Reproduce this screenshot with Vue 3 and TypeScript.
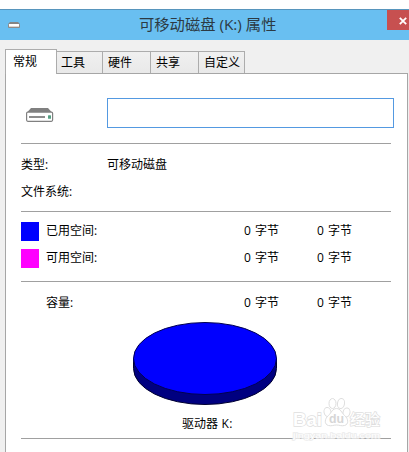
<script setup lang="ts">
interface UsageRow {
  label: string
  color: string
  bytes: string
  rounded: string
}

const tabs: string[] = ['常规', '工具', '硬件', '共享', '自定义']
const usage: UsageRow[] = [
  { label: '已用空间', color: '#0000ff', bytes: '0', rounded: '0' },
  { label: '可用空间', color: '#ff00ff', bytes: '0', rounded: '0' },
]
</script>

<template>
  <main class="window">
    <header class="titlebar">
      <svg class="title-icon" width="12" height="6" viewBox="0 0 12 6">
        <path d="M2 0h8l2 2H0z" fill="#858585" />
        <rect y="2" width="12" height="4" rx="1" fill="#8f8b88" />
        <path d="M1 2h10v2H1z" fill="#fff" />
        <path d="M1 4h10v1H1z" fill="#ddd5cf" />
      </svg>
      <h1 class="title">可移动磁盘<span class="latin"> (K:) </span>属性</h1>
      <button class="close" type="button" aria-label="关闭">
        <svg width="8" height="8" viewBox="0 0 8 8">
          <path d="M.8.8 7.2 7.2M7.2.8.8 7.2" stroke="#fff" stroke-width="1.8" />
        </svg>
      </button>
    </header>

    <nav class="tabs">
      <button
        v-for="(tab, i) in tabs"
        :key="tab"
        type="button"
        class="tab"
        :class="{ active: i === 0, wide: tab.length > 2 }"
      >{{ tab }}</button>
    </nav>

    <section class="panel">
      <div class="identity">
        <svg class="drive" width="28" height="14" viewBox="0 0 28 14">
          <path d="M5 0h17l4 4.5H1z" fill="#808080" />
          <rect x=".6" y="4.1" width="26" height="9.2" rx="1.2" fill="#fff" stroke="#808080" stroke-width="1.2" />
          <path d="M3 9h16" stroke="#808080" stroke-width="1.8" />
          <rect x="22" y="7.2" width="3" height="3.600" rx=".6" fill="#55a083" />
        </svg>
        <input class="name" type="text" aria-label="卷标" />
      </div>
      <div class="facts">
        <div class="fact"><span>类型:</span><span>可移动磁盘</span></div>
        <div class="fact"><span>文件系统:</span></div>
      </div>
      <div class="usage">
        <div v-for="row in usage" :key="row.label" class="row">
          <i class="swatch" :style="{ background: row.color }"></i>
          <span class="label">{{ row.label }}:</span>
          <span class="value"><b>{{ row.bytes }}</b>字节</span>
          <span class="value"><b>{{ row.rounded }}</b>字节</span>
        </div>
      </div>
      <div class="capacity">
        <div class="row total">
          <i></i>
          <span class="label">容量:</span>
          <span class="value"><b>0</b>字节</span>
          <span class="value"><b>0</b>字节</span>
        </div>
        <svg class="pie" width="144" height="83" viewBox="0 0 144 83">
          <path d="M.5 36.5v10a71.5 36 0 0 0 143 0v-10z" fill="#000080" stroke="#000030" />
          <ellipse cx="72" cy="36.5" rx="71.5" ry="36" fill="#00f" stroke="#000050" />
        </svg>
        <div class="drive-label">驱动器<span> K:</span></div>
      </div>
    </section>

    <svg class="watermark" width="94" height="46" viewBox="0 0 94 46">
      <g fill="#fff" stroke="#dedede" stroke-width="1">
        <ellipse cx="36.500" cy="16" rx="3.500" ry="4.500" transform="rotate(-12 36.500 16)" />
        <ellipse cx="41.500" cy="7.500" rx="3.500" ry="5" />
        <ellipse cx="50" cy="7.500" rx="3.500" ry="5" transform="rotate(10 50 7.500)" />
        <ellipse cx="55.500" cy="16.500" rx="3.500" ry="4.500" transform="rotate(12 55.500 16.500)" />
        <path d="M45.500 12.500c4 0 5 4 8 7 4 3 4.500 9 0 10-3 .8-5-.5-8-.5s-5 1.300-8 .5c-4.500-1-4-7 0-10 3-3 4-7 8-7z" />
      </g>
      <g class="mark">
        <text x="2" y="30" font-size="19" textLength="29" lengthAdjust="spacingAndGlyphs">Bai</text>
        <text x="38" y="27" font-size="12" textLength="15" lengthAdjust="spacingAndGlyphs" class="du">du</text>
        <text x="59" y="29" font-size="15" textLength="30" lengthAdjust="spacingAndGlyphs" class="cjk">经验</text>
        <text x="2" y="42" font-size="8" textLength="87" lengthAdjust="spacingAndGlyphs" class="site">jingyan.baidu.com</text>
      </g>
    </svg>
  </main>
</template>

<style>
body { margin: 0; background: #fff; overflow: hidden; }
</style>

<style scoped>
* { box-sizing: border-box; }
.window {
  position: relative;
  display: flex;
  flex-direction: column;
  width: 409px;
  height: 452px;
  padding-top: 9px;
  overflow: hidden;
  background: linear-gradient(#fff 9px, #f0f0f0 9px);
  color: #000;
  font: 12px/18px "Open Sans", "Noto Sans CJK SC", sans-serif;
}
button { padding: 0; border: 0; font: inherit; color: inherit; }
.titlebar {
  display: flex;
  flex: none;
  height: 31px;
  padding-left: 8px;
  border-top: 1px solid #5795bd;
  background: #69bff1;
}
.title-icon { margin-top: 12px; }
.title {
  width: 138px;
  margin: 0 auto 0 119px;
  color: #2c3a43;
  font-size: 15.3px;
  font-weight: 400;
  line-height: 29px;
  white-space: pre;
}
.close {
  display: flex;
  align-items: center;
  width: 22px;
  height: 20px;
  padding-left: 12px;
  background: #c75050;
}
.close svg { flex: none; margin-top: 1px; }
.tabs {
  display: flex;
  flex: none;
  align-items: flex-end;
  height: 33px;
  margin-left: 5px;
}
.tab {
  width: 48px;
  height: 23px;
  margin-bottom: -1px;
  padding-left: 5px;
  border: 1px solid #acacac;
  border-left: 0;
  background: linear-gradient(#f0f0f0, #e9e9e9);
  line-height: 21px;
  text-align: left;
}
.tab.active {
  z-index: 1;
  width: 52px;
  height: 25px;
  padding-left: 7px;
  border-left: 1px solid #acacac;
  border-bottom: 0;
  background: #fff;
  line-height: 20px;
}
.tab:nth-child(2) { width: 46px; padding-left: 4px; }
.tab.wide { width: 46px; }
.panel {
  flex: 1;
  width: 403px;
  margin-left: 5px;
  padding: 0 16px 0 15px;
  border: 1px solid #a6a6a6;
  border-bottom: 0;
  background: #fff;
}
.identity {
  display: flex;
  width: 373px;
  height: 69px;
  padding: 24px 0 0 5px;
}
.drive { flex: none; margin: 10px 53px 0 0; }
.name {
  flex: none;
  width: 287px;
  height: 30px;
  border: 1px solid #5499e1;
  outline: 0;
  background: #fff;
}
.facts, .usage, .capacity {
  width: 370px;
  border-top: 1px solid #a0a0a0;
}
.facts { height: 68px; padding-top: 12px; }
.fact { display: grid; grid-template-columns: 86px 1fr; height: 27px; }
.usage { height: 70px; padding-top: 10px; }
.row {
  display: grid;
  grid-template-columns: 25px 198px 73px 1fr;
  height: 27px;
}
.swatch { width: 18px; height: 19px; }
.value b { display: inline-block; width: 11px; font-weight: 400; }
.capacity { height: 158px; padding-top: 12px; border-bottom: 1px solid #a0a0a0; }
.total { height: 28px; }
.pie { display: block; margin-left: 112px; }
.drive-label { margin: 10px 0 0 161px; white-space: pre; }
.drive-label span { letter-spacing: .4px; }
.watermark { position: absolute; left: 291px; top: 396px; pointer-events: none; }
.mark {
  fill: #fff;
  stroke: #dedede;
  stroke-width: 1.4px;
  paint-order: stroke;
  font-family: "Liberation Sans", "Noto Sans CJK SC", sans-serif;
  font-weight: 700;
}
.du { fill: #d6d6d6; stroke: none; }
.cjk { font-weight: 500; }
.site { stroke: #ececec; font-weight: 400; }
</style>
